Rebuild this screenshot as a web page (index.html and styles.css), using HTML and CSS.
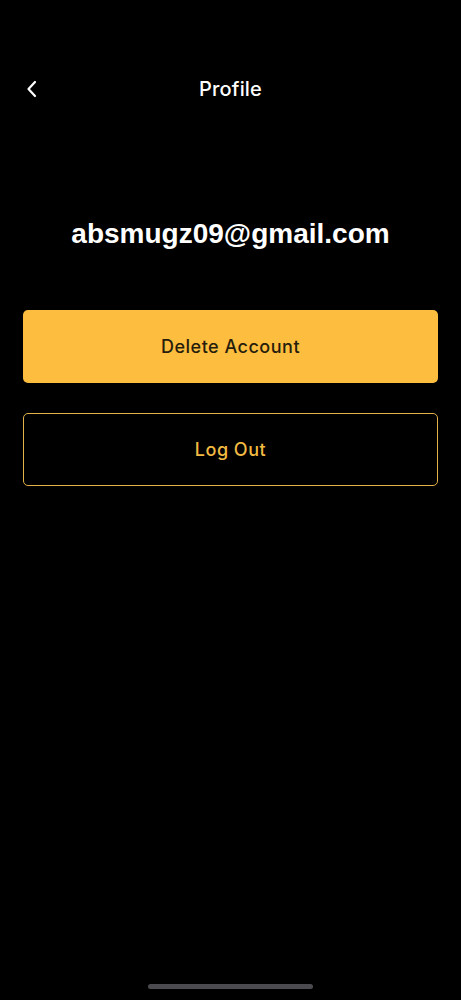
FILE: index.html
```html
<!DOCTYPE html>
<html>
<head>
<meta charset="utf-8">
<link rel="stylesheet" href="styles.css">
</head>
<body>
<div class="screen">
  <header class="topbar">
    <button class="back" aria-label="Back">
      <svg width="14" height="18" viewBox="0 0 14 18"><path d="M10 2 L3.5 9 L10 16" fill="none" stroke="#fff" stroke-width="2.2" stroke-linecap="round" stroke-linejoin="round"/></svg>
    </button>
    <h1 class="title">Profile</h1>
    <span class="spacer"></span>
  </header>
  <main class="content">
    <p class="email">absmugz09@gmail.com</p>
    <button class="btn btn-primary">Delete Account</button>
    <button class="btn btn-outline">Log Out</button>
  </main>
  <div class="home-indicator"></div>
</div>
</body>
</html>
```
FILE: styles.css
```css
html, body {
  margin: 0;
  padding: 0;
  background: #000;
}
.screen {
  width: 461px;
  height: 1000px;
  background: #000;
  display: flex;
  flex-direction: column;
  font-family: "Inter", "Liberation Sans", sans-serif;
  color: #fff;
}
.topbar {
  display: flex;
  align-items: center;
  height: 40px;
  margin-top: 69px;
  padding: 0 23px;
}
.back {
  width: 30px;
  height: 30px;
  padding: 0;
  background: none;
  border: none;
  display: flex;
  align-items: center;
  justify-content: flex-start;
  padding-left: 2px;
}
.spacer {
  width: 30px;
}
.title {
  flex: 1;
  margin: 0;
  text-align: center;
  font-size: 20px;
  font-weight: 500;
  letter-spacing: 0.2px;
}
.content {
  display: flex;
  flex-direction: column;
  padding: 0 23px;
  flex: 1;
}
.email {
  margin: 109px 0 0;
  text-align: center;
  font-family: "Liberation Sans", Arial, sans-serif;
  font-weight: 700;
  font-size: 28px;
  line-height: 32px;
}
.btn {
  width: 415px;
  height: 73px;
  border-radius: 5px;
  font-family: "Inter", "Liberation Sans", sans-serif;
  font-size: 18px;
  font-weight: 500;
  letter-spacing: 0.5px;
  box-sizing: border-box;
}
.btn-primary {
  margin-top: 60px;
  background: #fdbd3e;
  border: none;
  color: #261d0c;
}
.btn-outline {
  margin-top: 30px;
  background: #000;
  border: 1px solid #e3b04a;
  color: #f2ba42;
}
.home-indicator {
  align-self: center;
  width: 165px;
  height: 5px;
  border-radius: 3px;
  background: #4b4b4f;
  margin-bottom: 11px;
}
```
